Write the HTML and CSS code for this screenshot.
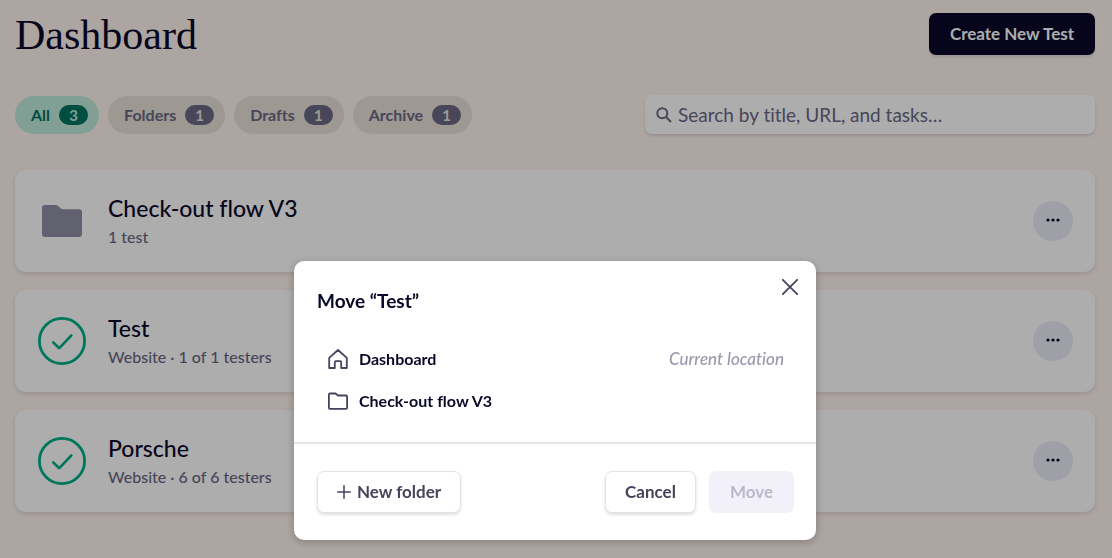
FILE: index.html
```
<!DOCTYPE html>
<html lang="en">
<head>
    <meta charset="UTF-8">
    <meta name="viewport" content="width=device-width, initial-scale=1.0">
    <title>Dashboard</title>
    <link rel="stylesheet" href="styles.css">
</head>
<body>

    <div class="page">
        <header class="page-header">
            <h1>Dashboard</h1>
            <button type="button" class="btn btn-primary">Create New Test</button>
        </header>

        <div class="toolbar">
            <nav class="filters" aria-label="Filter tests">
                <button type="button" class="chip active">All <span class="count">3</span></button>
                <button type="button" class="chip">Folders <span class="count">1</span></button>
                <button type="button" class="chip">Drafts <span class="count">1</span></button>
                <button type="button" class="chip">Archive <span class="count">1</span></button>
            </nav>
            <label class="search">
                <svg viewBox="0 0 16 16" width="16" height="16" fill="none" stroke="currentColor" stroke-width="2"><circle cx="6.3" cy="6.3" r="5"/><path d="M10 10l5 5"/></svg>
                <input type="search" aria-label="Search" placeholder="Search by title, URL, and tasks…">
            </label>
        </div>

        <main class="cards">
            <article class="card">
                <div class="card-icon">
                    <svg class="folder" viewBox="0 0 40 32" width="40" height="32" fill="currentColor"><path d="M3 0h10.500q1.300 0 2.300.8L20 4.200h17a3 3 0 0 1 3 3V29a3 3 0 0 1-3 3H3a3 3 0 0 1-3-3V3a3 3 0 0 1 3-3z"/></svg>
                </div>
                <div class="card-text">
                    <h2>Check-out flow V3</h2>
                    <p>1 test</p>
                </div>
                <button type="button" class="more" aria-label="More options">
                    <svg viewBox="0 0 14 4" width="14" height="4" fill="currentColor"><circle cx="2" cy="2" r="1.600"/><circle cx="7" cy="2" r="1.600"/><circle cx="12" cy="2" r="1.600"/></svg>
                </button>
            </article>

            <article class="card">
                <div class="card-icon">
                    <svg class="done" viewBox="0 0 48 48" width="48" height="48" fill="none" stroke="currentColor" stroke-linecap="round" stroke-linejoin="round"><circle cx="24" cy="24" r="22.600" stroke-width="2.800"/><path d="M15.300 25.500l6 5.700L33.300 18.500" stroke-width="2.600"/></svg>
                </div>
                <div class="card-text">
                    <h2>Test</h2>
                    <p>Website · 1 of 1 testers</p>
                </div>
                <button type="button" class="more" aria-label="More options">
                    <svg viewBox="0 0 14 4" width="14" height="4" fill="currentColor"><circle cx="2" cy="2" r="1.600"/><circle cx="7" cy="2" r="1.600"/><circle cx="12" cy="2" r="1.600"/></svg>
                </button>
            </article>

            <article class="card">
                <div class="card-icon">
                    <svg class="done" viewBox="0 0 48 48" width="48" height="48" fill="none" stroke="currentColor" stroke-linecap="round" stroke-linejoin="round"><circle cx="24" cy="24" r="22.600" stroke-width="2.800"/><path d="M15.300 25.500l6 5.700L33.300 18.500" stroke-width="2.600"/></svg>
                </div>
                <div class="card-text">
                    <h2>Porsche</h2>
                    <p>Website · 6 of 6 testers</p>
                </div>
                <button type="button" class="more" aria-label="More options">
                    <svg viewBox="0 0 14 4" width="14" height="4" fill="currentColor"><circle cx="2" cy="2" r="1.600"/><circle cx="7" cy="2" r="1.600"/><circle cx="12" cy="2" r="1.600"/></svg>
                </button>
            </article>
        </main>
    </div>

    <div class="overlay">
        <div class="modal" role="dialog" aria-modal="true" aria-labelledby="move-title">
            <button type="button" class="close" aria-label="Close">
                <svg viewBox="0 0 16 16" width="16" height="16" fill="none" stroke="currentColor" stroke-width="1.800" stroke-linecap="round"><path d="M.8.8l14.400 14.400M15.200.8L.8 15.200"/></svg>
            </button>

            <div class="modal-body">
                <h2 id="move-title">Move “Test”</h2>
                <ul class="locations">
                    <li>
                        <button type="button" class="location">
                            <svg viewBox="0 0 20 20" width="20" height="20" fill="none" stroke="currentColor" stroke-width="1.800" stroke-linejoin="round"><path d="M1.200 8.800L10 1l8.800 7.800V19h-5.600v-5.800a1 1 0 0 0-1-1H7.800a1 1 0 0 0-1 1V19H1.200z"/></svg>
                            <span>Dashboard</span>
                            <em>Current location</em>
                        </button>
                    </li>
                    <li>
                        <button type="button" class="location">
                            <svg viewBox="0 0 20 20" width="20" height="20" fill="none" stroke="currentColor" stroke-width="1.800" stroke-linejoin="round"><path d="M1.900 2.500h5.600l2.500 2h8.100a1 1 0 0 1 1 1v11.300a1 1 0 0 1-1 1H1.900a1 1 0 0 1-1-1V3.500a1 1 0 0 1 1-1z"/></svg>
                            <span>Check-out flow V3</span>
                        </button>
                    </li>
                </ul>
            </div>

            <div class="modal-footer">
                <button type="button" class="btn btn-outline">
                    <svg viewBox="0 0 14 14" width="14" height="14" fill="none" stroke="currentColor" stroke-width="1.500" stroke-linecap="round"><path d="M7 .7v12.600M.7 7h12.600"/></svg>
                    New folder
                </button>
                <div class="actions">
                    <button type="button" class="btn btn-outline">Cancel</button>
                    <button type="button" class="btn btn-disabled" disabled>Move</button>
                </div>
            </div>
        </div>
    </div>

</body>
</html>
```
FILE: styles.css
```
* {
    box-sizing: border-box;
}

body {
    margin: 0;
    background-color: #fff3ed;
    color: #0a0828;
    font-family: Lato, "Liberation Sans", sans-serif;
    font-size: 16px;
    font-variant-ligatures: none;
    line-height: 20px;
}

h1, h2, p, ul {
    margin: 0;
    padding: 0;
}

button, input {
    font: inherit;
    font-variant-ligatures: none;
    color: inherit;
}

button {
    border: none;
    cursor: pointer;
}

svg {
    flex-shrink: 0;
}

.page {
    padding: 13px 17px 16px 15px;
}

/* Header */
.page-header {
    display: flex;
    align-items: flex-start;
    justify-content: space-between;
}

.page-header h1 {
    padding-top: 1px;
    font-family: "Liberation Serif", serif;
    font-size: 42px;
    font-weight: 400;
    line-height: 42px;
}

/* Buttons */
.btn {
    display: flex;
    align-items: center;
    gap: 6px;
    height: 42px;
    padding: 0 21px 1px;
    border-radius: 7px;
    font-size: 17px;
    font-weight: 700;
}

.btn-primary {
    background-color: #0a0828;
    color: #fff;
    box-shadow: 0 2px 3px rgba(0, 0, 0, 0.1);
}

.btn-outline {
    padding: 0 19px 1px;
    background-color: #fff;
    border: 1px solid #e3e3e6;
    color: #47435c;
    box-shadow: 0 2px 3px rgba(0, 0, 0, 0.12);
}

.btn-disabled {
    background-color: #f2f1fa;
    color: #bab8c9;
    cursor: default;
}

/* Filters and search */
.toolbar {
    display: flex;
    align-items: flex-end;
    justify-content: space-between;
    margin-top: 39px;
}

.filters {
    display: flex;
    gap: 9px;
}

.chip {
    display: flex;
    align-items: center;
    gap: 9px;
    height: 38px;
    padding: 0 11px 0 16px;
    border-radius: 19px;
    background-color: #e7e0d8;
    color: #6a6784;
    font-weight: 700;
}

.count {
    width: 29px;
    height: 20px;
    border-radius: 10px;
    background-color: #6a6784;
    color: #e7e0d8;
    font-size: 15px;
}

.chip.active {
    background-color: #bfebda;
    color: #007260;
}

.chip.active .count {
    background-color: #007260;
    color: #bfebda;
}

.search {
    display: flex;
    align-items: center;
    gap: 6px;
    width: 450px;
    height: 39px;
    padding: 0 11px;
    border-radius: 7px;
    background-color: #fff;
    color: #6a6784;
    box-shadow: 0 2px 3px rgba(0, 0, 0, 0.12);
}

.search input {
    flex-grow: 1;
    min-width: 0;
    padding: 0;
    border: none;
    outline: none;
    background: none;
    font-size: 19px;
}

.search input::placeholder {
    color: #6a6784;
    opacity: 1;
}

/* Cards */
.cards {
    display: flex;
    flex-direction: column;
    gap: 18px;
    margin-top: 36px;
}

.card {
    display: flex;
    align-items: center;
    gap: 22px;
    padding: 22px;
    border-radius: 11px;
    background-color: #fff;
    box-shadow: 0 2px 4px rgba(0, 0, 0, 0.12);
}

.card-icon {
    display: flex;
    justify-content: center;
    width: 49px;
}

.folder {
    color: #918fa4;
}

.done {
    color: #00b087;
}

.card-text {
    flex-grow: 1;
}

.card-text h2 {
    font-size: 23px;
    font-weight: 500;
    line-height: 32px;
}

.card-text p {
    color: #6a6784;
    font-weight: 500;
    line-height: 26px;
}

.more {
    display: flex;
    align-items: center;
    justify-content: center;
    width: 40px;
    height: 40px;
    padding: 0 0 2px;
    border-radius: 50%;
    background-color: #ebebf7;
}

/* Move dialog */
.overlay {
    position: fixed;
    inset: 0;
    display: flex;
    align-items: flex-end;
    justify-content: center;
    padding: 18px 18px 18px 16px;
    background-color: rgba(0, 0, 0, 0.32);
}

.modal {
    position: relative;
    width: 100%;
    max-width: 522px;
    border-radius: 10px;
    background-color: #fff;
    box-shadow: 0 2px 8px rgba(0, 0, 0, 0.25);
}

.close {
    position: absolute;
    top: 12px;
    right: 12px;
    display: flex;
    padding: 6px;
    background: none;
    color: #47435c;
}

.modal-body {
    padding: 28px 22px 20px 23px;
}

.modal-body h2 {
    font-size: 19px;
    line-height: 24px;
}

.locations {
    margin-top: 25px;
    list-style: none;
}

.location {
    display: flex;
    align-items: center;
    gap: 11px;
    width: 100%;
    height: 42px;
    padding: 0 10px 0 11px;
    background: none;
    font-weight: 700;
    text-align: left;
}

.location svg {
    color: #47435c;
}

.location em {
    margin-left: auto;
    color: #9b98ad;
    font-size: 17px;
    font-weight: 500;
}

.modal-footer {
    display: flex;
    justify-content: space-between;
    padding: 27px 22px 27px 23px;
    border-top: 2px solid #e6e6e8;
}

.actions {
    display: flex;
    gap: 13px;
}
```
